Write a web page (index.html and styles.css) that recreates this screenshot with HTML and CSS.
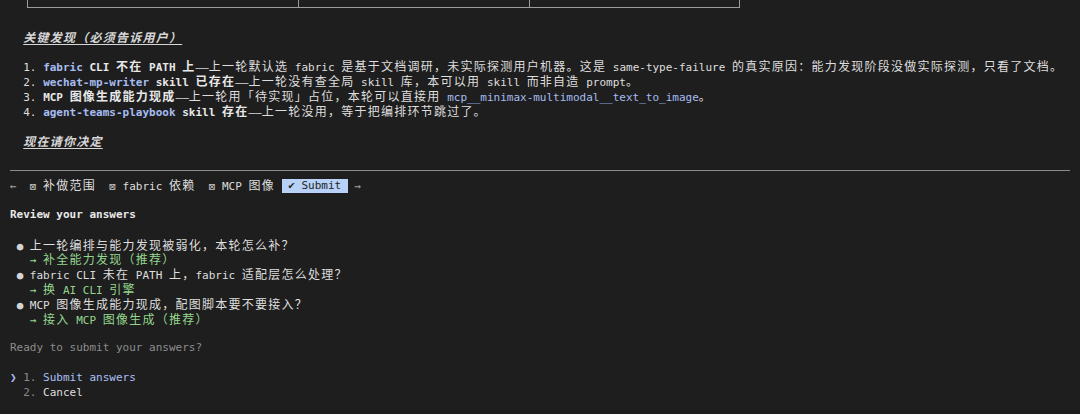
FILE: index.html
```html
<!DOCTYPE html>
<html lang="zh-CN">
<head>
<meta charset="utf-8">
<title>Review your answers</title>
<link rel="stylesheet" href="styles.css">
</head>
<body>
<main class="term">
  <div class="row"><div class="tbl"><span class="cell c1"></span><span class="cell c2"></span><span class="cell c3"></span></div></div>
  <div class="blank"></div>
  <div class="ln">  <span class="hd"><span class="c">关键发现（必须告诉用户）</span></span></div>
  <div class="blank"></div>
  <div class="ln">  1. <b><span class="code">fabric</span> CLI <span class="c">不在</span> PATH <span class="c">上</span></b>——<span class="c">上一轮默认选</span> fabric <span class="c">是基于文档调研，未实际探测用户机器。这是</span> same-type-failure <span class="c">的真实原因：能力发现阶段没做实际探测，只看了文档。</span></div>
  <div class="ln">  2. <b><span class="code">wechat-mp-writer</span> skill <span class="c">已存在</span></b>——<span class="c">上一轮没有查全局</span> skill <span class="c">库，本可以用</span> skill <span class="c">而非自造</span> prompt<span class="c">。</span></div>
  <div class="ln">  3. <b>MCP <span class="c">图像生成能力现成</span></b>——<span class="c">上一轮用「待实现」占位，本轮可以直接用</span> <span class="code">mcp__minimax-multimodal__text_to_image</span><span class="c">。</span></div>
  <div class="ln">  4. <b><span class="code">agent-teams-playbook</span> skill <span class="c">存在</span></b>——<span class="c">上一轮没用，等于把编排环节跳过了。</span></div>
  <div class="blank"></div>
  <div class="ln">  <span class="hd"><span class="c">现在请你决定</span></span></div>
  <div class="blank"></div>
  <div class="rule"></div>
  <div class="ln"><span class="g dim2">←</span>  <span class="g box">⊠</span> <span class="c">补做范围</span>  <span class="g box">⊠</span> fabric <span class="c">依赖</span>  <span class="g box">⊠</span> MCP <span class="c">图像</span> <span class="sel"> <span class="g">✔</span> Submit </span> <span class="g dim2">→</span></div>
  <div class="blank"></div>
  <div class="ln"><b>Review your answers</b></div>
  <div class="blank"></div>
  <div class="ln"> <span class="g bullet">●</span> <span class="c">上一轮编排与能力发现被弱化，本轮怎么补？</span></div>
  <div class="ln ans">   <span class="g">→</span> <span class="c">补全能力发现（推荐）</span></div>
  <div class="ln"> <span class="g bullet">●</span> fabric CLI <span class="c">未在</span> PATH <span class="c">上，</span>fabric <span class="c">适配层怎么处理？</span></div>
  <div class="ln ans">   <span class="g">→</span> <span class="c">换</span> AI CLI <span class="c">引擎</span></div>
  <div class="ln"> <span class="g bullet">●</span> MCP <span class="c">图像生成能力现成，配图脚本要不要接入？</span></div>
  <div class="ln ans">   <span class="g">→</span> <span class="c">接入</span> MCP <span class="c">图像生成（推荐）</span></div>
  <div class="blank"></div>
  <div class="ln dim">Ready to submit your answers?</div>
  <div class="blank"></div>
  <div class="ln"><span class="g accent">❯</span> <span class="dim">1.</span> <span class="accent">Submit answers</span></div>
  <div class="ln">  <span class="dim">2.</span> Cancel</div>
</main>
</body>
</html>
```

FILE: styles.css
```css
html, body {
  margin: 0;
  background: #1e1e1e;
}

.term {
  font-family: "DejaVu Sans Mono", "Liberation Mono", monospace;
  font-size: 11px;
  line-height: 14.85px;
  color: #dedede;
  padding: 0 10px;
  height: 414px;
  overflow: hidden;
}

.ln {
  white-space: pre;
  height: 14.85px;
}

.blank {
  height: 14.85px;
}

.row {
  height: 14.85px;
}

.tbl {
  margin-left: 17px;
  width: 711px;
  height: 7px;
  border: 1px solid #9c9c9c;
  border-top: 0;
  display: flex;
}

.cell {
  display: block;
  height: 100%;
}

.c1 {
  width: 270px;
  border-right: 1px solid #9c9c9c;
}

.c2 {
  width: 230px;
  border-right: 1px solid #9c9c9c;
}

.c3 {
  flex: 1;
}

.c {
  font-family: "Noto Sans CJK SC", "Noto Sans CJK JP", sans-serif;
  font-size: 12px;
  letter-spacing: 1.246px;
}

b {
  font-weight: bold;
  color: #e8e8e8;
}

.code {
  color: #a6bcf0;
}

.hd {
  font-weight: bold;
  font-style: italic;
  text-decoration: underline;
  text-underline-offset: 2px;
  color: #d6d6d6;
}

.rule {
  height: 14.85px;
  display: flex;
  align-items: center;
}

.rule::before {
  content: "";
  flex: 1;
  border-top: 1px solid #8c8c8c;
}

.g {
  display: inline-block;
  width: 1ch;
  text-align: center;
}

.box {
  color: #c4c4c4;
}

.dim2 {
  color: #a0a0a0;
}

.sel {
  display: inline-block;
  background: #b7d2f6;
  color: #1e1e1e;
  line-height: 14px;
  height: 14px;
  vertical-align: top;
  margin-top: 0.4px;
}

.bullet {
  color: #d4d4d4;
}

.ans {
  color: #95d68e;
}

.dim {
  color: #8c8c8c;
}

.accent {
  color: #aac0f4;
}
```
